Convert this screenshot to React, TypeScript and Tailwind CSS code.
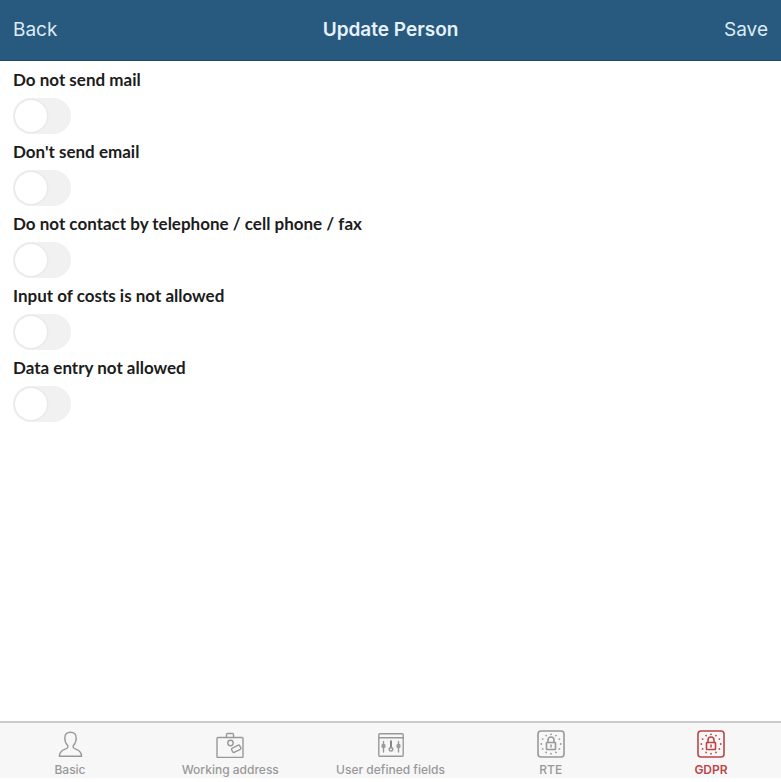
import { useState, type ReactNode } from 'react';

type TabId = 'basic' | 'working' | 'fields' | 'rte' | 'gdpr';

const OPTIONS = [
  { id: 'no-mail', label: 'Do not send mail' },
  { id: 'no-email', label: "Don't send email" },
  { id: 'no-phone', label: 'Do not contact by telephone / cell phone / fax' },
  { id: 'no-costs', label: 'Input of costs is not allowed' },
  { id: 'no-entry', label: 'Data entry not allowed' },
];

function Icon({ children }: { children: ReactNode }) {
  return (
    <svg
      className="h-7 w-7"
      viewBox="0 0 28 28"
      fill="none"
      stroke="currentColor"
      strokeWidth="1.4"
      strokeLinecap="round"
      strokeLinejoin="round"
      aria-hidden="true"
    >
      {children}
    </svg>
  );
}

function PersonIcon() {
  return (
    <Icon>
      <path d="M14.500 2.200c-3.700 0-5.700 2.400-5.700 5.800 0 3 1 5.700 2.700 7.300.5.600.6 1.200.3 1.900-.4 1-1.200 1.500-2.600 2-3.300 1.200-5.600 3-5.800 7h22.200c-.2-4-2.500-5.800-5.800-7-1.400-.5-2.200-1-2.600-2-.3-.7-.2-1.300.3-1.900 1.700-1.600 2.700-4.300 2.700-7.300 0-3.400-2-5.800-5.700-5.800z" />
    </Icon>
  );
}

function BriefcaseIcon() {
  return (
    <Icon>
      <rect x="1" y="7.5" width="26" height="20" rx="1" />
      <path d="M10.500 7.500V4.500c0-.6.400-1 1-1h5c.6 0 1 .4 1 1v3" />
      <circle cx="14.500" cy="13" r="2.700" />
      <rect x="15.700" y="16.500" width="9" height="4.600" rx="1" transform="rotate(-27 20.200 18.800)" />
    </Icon>
  );
}

function SlidersIcon() {
  return (
    <Icon>
      <rect x="1.800" y="3.800" width="24.400" height="22.400" rx="1" />
      <path d="M1.800 7.800h24.400" />
      <path d="M6.500 11.500v10.500M21.500 11.500v10.500" />
      <path d="M14 11v7" className="stroke-[#555555]" />
      <circle cx="6.500" cy="16" r="1.500" />
      <circle cx="14" cy="19.200" r="1.800" />
      <circle cx="21.500" cy="16" r="1.500" />
    </Icon>
  );
}

// Lock inside the ring of twelve stars
function PrivacyIcon() {
  return (
    <Icon>
      <rect x="1" y="1" width="26" height="26" rx="3" strokeWidth="1.6" />
      <rect x="9.500" y="12.500" width="9" height="7" rx="0.5" strokeWidth="1.600" />
      <path d="M11 12.500v-2.500a3 3 0 0 1 6 0v2.500" strokeWidth="1.600" />
      <path d="M14 15v2" strokeWidth="1.500" />
      <path
        d="M14 4.300h.01M18.900 5.600h.01M22.400 9.100h.01M23.700 14h.01M22.400 18.900h.01M18.900 22.400h.01M14 23.700h.01M9.100 22.400h.01M5.600 18.900h.01M4.300 14h.01M5.600 9.100h.01M9.100 5.600h.01"
        strokeWidth="1.8"
      />
    </Icon>
  );
}

const TABS: { id: TabId; label: string; icon: ReactNode }[] = [
  { id: 'basic', label: 'Basic', icon: <PersonIcon /> },
  { id: 'working', label: 'Working address', icon: <BriefcaseIcon /> },
  { id: 'fields', label: 'User defined fields', icon: <SlidersIcon /> },
  { id: 'rte', label: 'RTE', icon: <PrivacyIcon /> },
  { id: 'gdpr', label: 'GDPR', icon: <PrivacyIcon /> },
];

export default function App() {
  const [activeTab, setActiveTab] = useState<TabId>('gdpr');

  return (
    <div className="flex min-h-screen flex-col bg-white font-['Inter',sans-serif]">
      <header className="grid h-[61px] grid-cols-3 items-center border-b border-[#1f4a6d] bg-[#28597f] px-[13px] text-[19px] text-[#dcebf5]">
        <button type="button" className="justify-self-start">
          Back
        </button>
        <h1 className="text-center font-semibold whitespace-nowrap text-[#e6f2fa]">
          Update Person
        </h1>
        <button type="button" className="justify-self-end">
          Save
        </button>
      </header>

      <main className="flex flex-1 flex-col gap-1.5 px-[13px] pt-[7px]">
        {OPTIONS.map((option) => (
          <div key={option.id} className="flex flex-col items-start gap-1.5">
            <label
              htmlFor={option.id}
              className="font-['Lato',sans-serif] text-[17px] leading-6 font-bold text-[#1c1c1c]"
            >
              {option.label}
            </label>
            <input
              id={option.id}
              type="checkbox"
              role="switch"
              className="flex h-9 w-[58px] cursor-pointer appearance-none items-center rounded-full bg-[#f1f1f1] px-0.5 before:h-8 before:w-8 before:rounded-full before:bg-white before:shadow-[0_0_3px_rgba(0,0,0,0.1)] before:content-[''] checked:justify-end checked:bg-[#28597f]"
            />
          </div>
        ))}
      </main>

      <nav className="mb-1 flex justify-between border-t-2 border-[#cbcbcb] bg-[#f7f7f7] px-3.5 pt-[7px]">
        {TABS.map((tab) => (
          <button
            key={tab.id}
            type="button"
            onClick={() => setActiveTab(tab.id)}
            className={`flex w-28 flex-col items-center gap-1 text-xs leading-4 whitespace-nowrap ${
              activeTab === tab.id ? 'font-semibold text-[#bd4446]' : 'font-medium text-[#999999]'
            }`}
          >
            {tab.icon}
            {tab.label}
          </button>
        ))}
      </nav>
    </div>
  );
}
